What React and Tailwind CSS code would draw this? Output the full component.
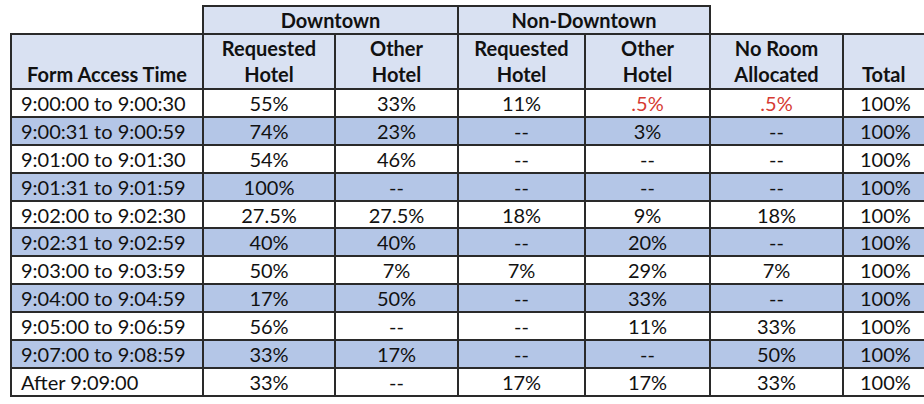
const rows = [
  ['9:00:00 to 9:00:30', '55%', '33%', '11%', '.5%', '.5%', '100%'],
  ['9:00:31 to 9:00:59', '74%', '23%', '--', '3%', '--', '100%'],
  ['9:01:00 to 9:01:30', '54%', '46%', '--', '--', '--', '100%'],
  ['9:01:31 to 9:01:59', '100%', '--', '--', '--', '--', '100%'],
  ['9:02:00 to 9:02:30', '27.5%', '27.5%', '18%', '9%', '18%', '100%'],
  ['9:02:31 to 9:02:59', '40%', '40%', '--', '20%', '--', '100%'],
  ['9:03:00 to 9:03:59', '50%', '7%', '7%', '29%', '7%', '100%'],
  ['9:04:00 to 9:04:59', '17%', '50%', '--', '33%', '--', '100%'],
  ['9:05:00 to 9:06:59', '56%', '--', '--', '11%', '33%', '100%'],
  ['9:07:00 to 9:08:59', '33%', '17%', '--', '--', '50%', '100%'],
  ['After 9:09:00', '33%', '--', '17%', '17%', '33%', '100%'],
];

const cell = 'border-2 border-[#2a2a2a]';

export default function App() {
  return (
    <div className="w-[924px] h-[404px] overflow-hidden bg-white pl-[10px] pt-[5px] font-['Lato',sans-serif] text-[#111] text-[20px]">
      <table className="border-collapse table-fixed w-[1002px]">
        <colgroup>
          <col className="w-[192px]" />
          <col className="w-[132px]" />
          <col className="w-[123px]" />
          <col className="w-[127px]" />
          <col className="w-[125px]" />
          <col className="w-[133px]" />
          <col className="w-[170px]" />
        </colgroup>
        <thead className="font-bold">
          <tr className="h-[28px]">
            <th />
            <th colSpan={2} className={`${cell} bg-[#d9e1f2] leading-[24px]`}>Downtown</th>
            <th colSpan={2} className={`${cell} bg-[#d9e1f2] leading-[24px]`}>Non-Downtown</th>
            <th colSpan={2} />
          </tr>
          <tr className="h-[55px] leading-[26px]">
            <th className={`${cell} bg-[#d9e1f2] align-bottom pb-[1px] text-center`}>Form Access Time</th>
            <th className={`${cell} bg-[#d9e1f2] align-bottom pb-[1px]`}>Requested<br />Hotel</th>
            <th className={`${cell} bg-[#d9e1f2] align-bottom pb-[1px]`}>Other<br />Hotel</th>
            <th className={`${cell} bg-[#d9e1f2] align-bottom pb-[1px]`}>Requested<br />Hotel</th>
            <th className={`${cell} bg-[#d9e1f2] align-bottom pb-[1px]`}>Other<br />Hotel</th>
            <th className={`${cell} bg-[#d9e1f2] align-bottom pb-[1px]`}>No Room<br />Allocated</th>
            <th className={`${cell} bg-[#d9e1f2] align-bottom pb-[1px] text-left pl-[18px]`}>Total</th>
          </tr>
        </thead>
        <tbody>
          {rows.map((r, i) => (
            <tr key={r[0]} className={`h-[27.9px] leading-[24px] ${i % 2 ? 'bg-[#b4c6e7]' : 'bg-white'}`}>
              <td className={`${cell} pl-[9px]`}>{r[0]}</td>
              {r.slice(1, 6).map((v, j) => (
                <td key={j} className={`${cell} text-center ${v === '.5%' ? 'text-[#d63a32]' : ''}`}>{v}</td>
              ))}
              <td className={`${cell} text-left pl-[16px]`}>{r[6]}</td>
            </tr>
          ))}
        </tbody>
      </table>
    </div>
  );
}
